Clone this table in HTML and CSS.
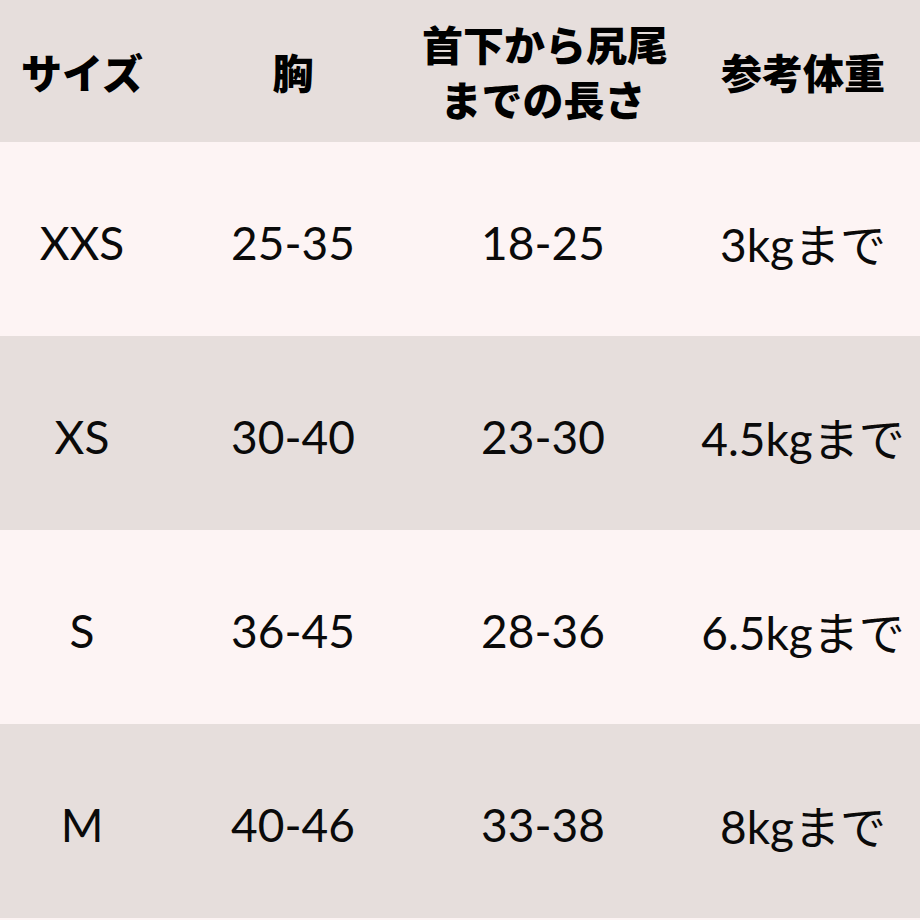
FILE: index.html
```html
<!DOCTYPE html>
<html lang="ja">
<head>
<meta charset="utf-8">
<link rel="stylesheet" href="styles.css">
</head>
<body>
<div class="table">
  <div class="row head">
    <div class="cell c1">サイズ</div>
    <div class="cell c2">胸</div>
    <div class="cell c3">首下から尻尾<br>までの長さ</div>
    <div class="cell c4">参考体重</div>
  </div>
  <div class="row light">
    <div class="cell c1">XXS</div>
    <div class="cell c2">25-35</div>
    <div class="cell c3">18-25</div>
    <div class="cell c4">3kgまで</div>
  </div>
  <div class="row dark">
    <div class="cell c1">XS</div>
    <div class="cell c2">30-40</div>
    <div class="cell c3">23-30</div>
    <div class="cell c4">4.5kgまで</div>
  </div>
  <div class="row light">
    <div class="cell c1">S</div>
    <div class="cell c2">36-45</div>
    <div class="cell c3">28-36</div>
    <div class="cell c4">6.5kgまで</div>
  </div>
  <div class="row dark">
    <div class="cell c1">M</div>
    <div class="cell c2">40-46</div>
    <div class="cell c3">33-38</div>
    <div class="cell c4">8kgまで</div>
  </div>
</div>
</body>
</html>
```
FILE: styles.css
```css
html, body {
  margin: 0;
  padding: 0;
  background: #fdf4f4;
}
.table {
  width: 920px;
  display: flex;
  flex-direction: column;
}
.row {
  display: grid;
  grid-template-columns: 164px 258px 242px 256px;
  height: 194px;
  align-items: center;
  color: #0a0a0a;
  font-family: Lato, "Noto Sans CJK JP", sans-serif;
  font-size: 46px;
}
.row.head {
  height: 142px;
  background: #e6dedc;
  font-family: "Noto Sans CJK JP", sans-serif;
  font-weight: 900;
  font-size: 41px;
  line-height: 55px;
  color: #000;
}
.row.light { background: #fdf4f4; }
.row.dark { background: #e6dedc; }
.cell {
  text-align: center;
  white-space: nowrap;
}
.row:not(.head) .cell {
  padding-top: 6px;
}
.c4 { padding-left: 22px; }
```
